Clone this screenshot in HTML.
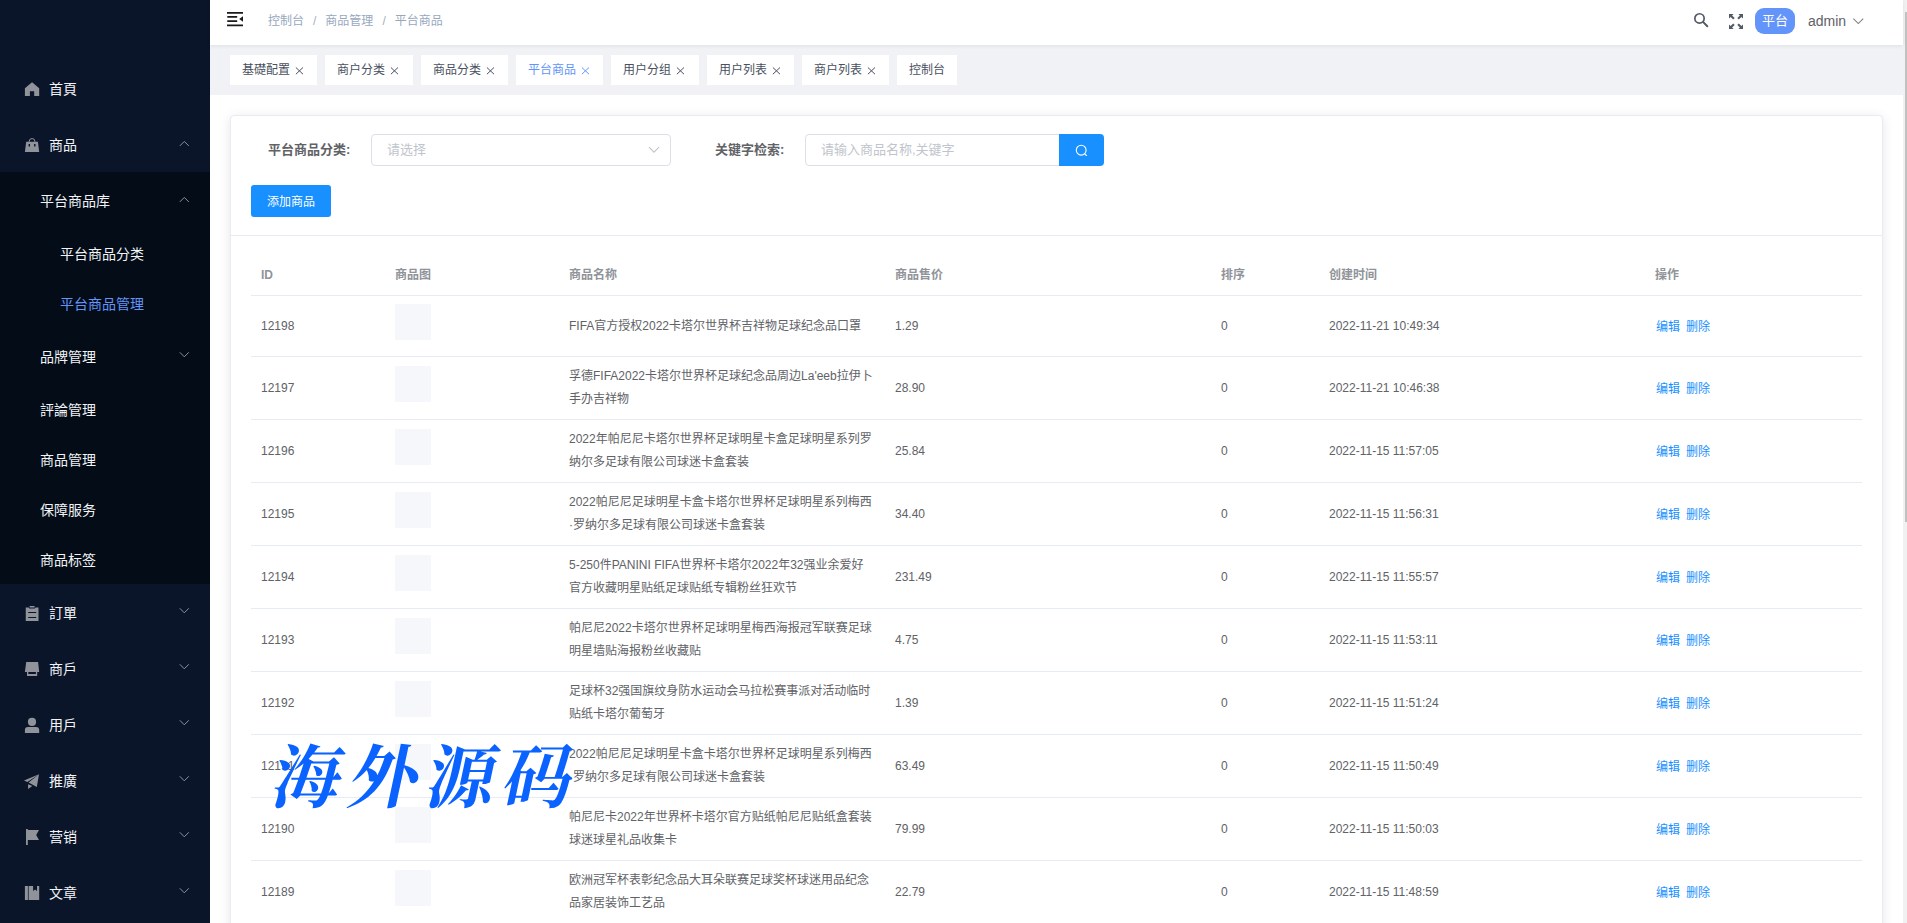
<!DOCTYPE html>
<html lang="zh-CN">
<head>
<meta charset="utf-8">
<title>平台商品</title>
<style>
*{box-sizing:border-box;margin:0;padding:0}
html,body{width:1907px;height:923px;overflow:hidden;background:#fff}
body{font-family:"Liberation Sans","Noto Sans CJK SC",sans-serif;font-size:14px;color:#606266;position:relative}
.abs{position:absolute}
/* sidebar */
#side{position:absolute;left:0;top:0;width:210px;height:923px;background:#0b1529;overflow:hidden}
#sub{position:absolute;left:0;top:172px;width:210px;height:412px;background:#030c17}
.mi{position:absolute;left:0;width:210px;height:56px;line-height:56px;color:#f1f3f6;font-size:14px;white-space:nowrap}
.mi .t{position:absolute;left:49px;top:0}
.mi svg.ic{position:absolute;left:24px;top:20px;width:16px;height:16px;fill:#909399}
.mi svg.ar{position:absolute;left:179px;top:23px;width:11px;height:8px;fill:none;stroke:#8a93a6;stroke-width:1;overflow:visible}
.s1 .t{left:40px}
.s2{height:50px;line-height:50px}
.s2 .t{left:60px}
.s2h{height:50px;line-height:50px}
.act{color:#6394f9}
/* navbar */
#nav{position:absolute;left:210px;top:0;width:1693px;height:45px;background:#fff;box-shadow:0 1px 4px rgba(0,21,41,.08);z-index:3}
#crumb{position:absolute;left:58px;top:1px;height:40px;line-height:40px;font-size:12px;color:#97a8be;white-space:nowrap}
#crumb i{font-style:normal;margin:0 9px;color:#a3b1c4}
#tags{position:absolute;left:210px;top:45px;width:1693px;height:50px;background:#f0f2f5}
.tag{position:absolute;top:10px;height:30px;line-height:31px;background:#fff;font-size:12px;color:#495060;padding-left:12px;white-space:nowrap}
.tag svg{position:absolute;top:11px;width:9px;height:9px;stroke:#495060;stroke-width:1;fill:none}
.tag.on{color:#6394f9}
.tag.on svg{stroke:#6394f9}
/* scrollbar */
#sbt{position:absolute;left:1903px;top:0;width:4px;height:923px;background:#f1f1f1}
#sbh{position:absolute;left:1905px;top:12px;width:2px;height:510px;background:#c1c1c1}
/* card */
#card{position:absolute;left:230px;top:115px;width:1653px;height:900px;background:#fff;border:1px solid #e6ebf5;border-radius:4px;box-shadow:0 2px 12px 0 rgba(0,0,0,.1)}
#hline{position:absolute;left:231px;top:235px;width:1651px;height:1px;background:#e6ebf5}
.lab{position:absolute;top:134px;height:32px;line-height:31px;font-size:13px;font-weight:bold;color:#606266;white-space:nowrap}
.inp{position:absolute;top:134px;height:32px;border:1px solid #dcdfe6;border-radius:4px;background:#fff;font-size:13px;color:#c0c4cc;line-height:30px;padding-left:15px;white-space:nowrap}
#sbtn{position:absolute;left:1059px;top:134px;width:45px;height:32px;background:#1890ff;border-radius:0 4px 4px 0}
#add{position:absolute;left:251px;top:185px;width:80px;height:32px;background:#1890ff;border-radius:3px;color:#fff;font-size:12px;line-height:32px;padding-top:1px;text-align:center}
/* table */
.row{position:absolute;left:251px;width:1611px;border-bottom:1px solid #e6ebf5;font-size:12px;color:#606266}
.row div{position:absolute;white-space:nowrap;line-height:23px}
.th{top:256px;height:40px;color:#909399;font-weight:bold}
.th div{top:8px}
.c0{left:10px}.c1{left:144px}.c2{left:318px}.c3{left:644px}.c4{left:970px}.c5{left:1078px}.c6{left:1405px}
.row .img{left:144px;width:36px;height:36px;background:#f5f7fa}
.c6{color:#1890ff}
.c6 span{margin-right:6px;position:relative;top:1px}
#wm{position:absolute;left:264px;top:734px;font-family:"Liberation Serif","Noto Serif CJK SC",serif;font-weight:700;font-size:69px;line-height:90px;color:#0a62ff;white-space:nowrap;letter-spacing:8px;transform:skewX(-12deg);transform-origin:left bottom;z-index:5}
</style>
</head>
<body>
<div id="side">
<div id="sub"></div>
<div class="mi " style="top:61px"><svg class="ic" viewBox="0 0 16 16"><path d="M8.05 1.3 L15.2 7.2 V15 H10.2 V10.2 H5.9 V15 H0.9 V7.2 Z"/></svg><span class="t">首頁</span></div>
<div class="mi " style="top:117px"><svg class="ic" viewBox="0 0 16 16"><path d="M2.2 4.8 H13.9 L15.2 15 H0.9 Z M4.6 7 h1.4 v2.4 h-1.4 z M10.1 7 h1.4 v2.4 h-1.4 z" fill-rule="evenodd"/><path d="M5.2 5 V4.4 a2.85 2.85 0 0 1 5.7 0 V5" fill="none" stroke="#909399" stroke-width="1"/></svg><span class="t">商品</span><svg class="ar" style="top:24px" viewBox="0 0 11 8"><path d="M0.8 4.9 L5.3 0.4 L9.8 4.9"/></svg></div>
<div class="mi s1" style="top:173px"><span class="t">平台商品库</span><svg class="ar" style="top:24px" viewBox="0 0 11 8"><path d="M0.8 4.9 L5.3 0.4 L9.8 4.9"/></svg></div>
<div class="mi s2" style="top:229px"><span class="t">平台商品分类</span></div>
<div class="mi s2 act" style="top:279px"><span class="t">平台商品管理</span></div>
<div class="mi s1" style="top:329px"><span class="t">品牌管理</span><svg class="ar" style="top:23px" viewBox="0 0 11 8"><path d="M0.8 0.3 L5.3 4.8 L9.8 0.3"/></svg></div>
<div class="mi s1 s2h" style="top:385px"><span class="t">評論管理</span></div>
<div class="mi s1 s2h" style="top:435px"><span class="t">商品管理</span></div>
<div class="mi s1 s2h" style="top:485px"><span class="t">保障服务</span></div>
<div class="mi s1 s2h" style="top:535px"><span class="t">商品标签</span></div>
<div class="mi " style="top:585px"><svg class="ic" viewBox="0 0 16 16"><path d="M1.75 2.5 H4.6 L5.4 3.6 H10.8 L11.6 2.5 H14.5 V16 H1.75 Z M5.6 1 H10.6 V2.6 H5.6 Z M4.2 7 v1 h8 v-1 z M4.2 11.9 v1 h8 v-1 z" fill-rule="evenodd"/></svg><span class="t">訂單</span><svg class="ar" style="top:23px" viewBox="0 0 11 8"><path d="M0.8 0.3 L5.3 4.8 L9.8 0.3"/></svg></div>
<div class="mi " style="top:641px"><svg class="ic" viewBox="0 0 16 16"><path d="M2.2 1 H14.1 L15.2 11 H0.9 Z"/><path d="M3 11 H4.3 V13 H11.9 V11 H13.2 V15 H3 Z"/></svg><span class="t">商戶</span><svg class="ar" style="top:23px" viewBox="0 0 11 8"><path d="M0.8 0.3 L5.3 4.8 L9.8 0.3"/></svg></div>
<div class="mi " style="top:697px"><svg class="ic" viewBox="0 0 16 16"><circle cx="8" cy="4.9" r="4.1"/><path d="M0.9 16 V13 Q0.9 10 3.9 10 H12.2 Q15.2 10 15.2 13 V16 Z"/></svg><span class="t">用戶</span><svg class="ar" style="top:23px" viewBox="0 0 11 8"><path d="M0.8 0.3 L5.3 4.8 L9.8 0.3"/></svg></div>
<div class="mi " style="top:753px"><svg class="ic" viewBox="0 0 16 16"><path d="M15 1.2 L0 7.5 L3.4 9.1 Z M15 1.2 L4.6 9.6 L12.8 14 Z M4.1 11.2 L4.1 16 L8.3 12.9 Z"/></svg><span class="t">推廣</span><svg class="ar" style="top:23px" viewBox="0 0 11 8"><path d="M0.8 0.3 L5.3 4.8 L9.8 0.3"/></svg></div>
<div class="mi " style="top:809px"><svg class="ic" viewBox="0 0 16 16"><path d="M2 0 H3.8 V16 H2 Z M3.8 1 H15 L12.2 6 L15 11 H3.8 Z"/></svg><span class="t">营销</span><svg class="ar" style="top:23px" viewBox="0 0 11 8"><path d="M0.8 0.3 L5.3 4.8 L9.8 0.3"/></svg></div>
<div class="mi " style="top:865px"><svg class="ic" viewBox="0 0 16 16"><path d="M0.9 1 H3.9 V15 H0.9 Z M4.6 1 H9.1 V6 L11.05 4.6 L13 6 V1 H15.2 V15 H4.6 Z"/></svg><span class="t">文章</span><svg class="ar" style="top:23px" viewBox="0 0 11 8"><path d="M0.8 0.3 L5.3 4.8 L9.8 0.3"/></svg></div>
</div>
<div id="nav">
<svg class="abs" style="left:17px;top:11px;width:16px;height:16px" viewBox="0 0 16 16"><path d="M0 0.9 H16 V2.7 H0 Z M0.3 5.1 H10.2 V6.8 H0.3 Z M0.3 9.3 H10.2 V11 H0.3 Z M0 13.4 H16 V15.2 H0 Z M16 5.2 V10.8 L12.2 8 Z" fill="#1a1a1a"/></svg>
<div id="crumb">控制台<i>/</i>商品管理<i>/</i>平台商品</div>
<svg class="abs" style="left:1483px;top:12px;width:17px;height:17px" viewBox="0 0 17 17"><circle cx="6.5" cy="6.4" r="4.65" fill="none" stroke="#535a66" stroke-width="1.7"/><path d="M10 9.9 L14.3 14.2" stroke="#535a66" stroke-width="2" stroke-linecap="round"/></svg>
<svg class="abs" style="left:1518px;top:13px;width:16px;height:17px" viewBox="0 0 16 17" fill="#535a66"><path d="M1 1 H5.6 L4.1 2.5 L6.7 5.1 L5.2 6.6 L2.6 4 L1 5.6 Z M15 1 V5.6 L13.4 4 L10.8 6.6 L9.3 5.1 L11.9 2.5 L10.4 1 Z M1 16 V11.4 L2.6 13 L5.2 10.4 L6.7 11.9 L4.1 14.5 L5.6 16 Z M15 16 H10.4 L11.9 14.5 L9.3 11.9 L10.8 10.4 L13.4 13 L15 11.4 Z"/></svg>
<div class="abs" style="left:1545px;top:8px;width:40px;height:26px;border-radius:9px;background:#6394f9;color:#fff;font-size:13px;line-height:25px;text-align:center">平台</div>
<div class="abs" style="left:1598px;top:0;height:42px;line-height:42px;font-size:14px;color:#606266">admin</div>
<svg class="abs" style="left:1643px;top:17px;width:11px;height:9px" viewBox="0 0 11 9"><path d="M0.4 1.6 L5.3 6.5 L10.2 1.6" fill="none" stroke="#7a7e86" stroke-width="1.05"/></svg>
</div>
<div id="tags">
<div class="tag" style="left:20px;width:87px">基礎配置<svg viewBox="0 0 9 9" style="left:65px"><path d="M0.9 1.5 L8 8.2 M8 1.5 L0.9 8.2"/></svg></div>
<div class="tag" style="left:115px;width:88px">商户分类<svg viewBox="0 0 9 9" style="left:65px"><path d="M0.9 1.5 L8 8.2 M8 1.5 L0.9 8.2"/></svg></div>
<div class="tag" style="left:211px;width:87px">商品分类<svg viewBox="0 0 9 9" style="left:65px"><path d="M0.9 1.5 L8 8.2 M8 1.5 L0.9 8.2"/></svg></div>
<div class="tag on" style="left:306px;width:87px">平台商品<svg viewBox="0 0 9 9" style="left:65px"><path d="M0.9 1.5 L8 8.2 M8 1.5 L0.9 8.2"/></svg></div>
<div class="tag" style="left:401px;width:88px">用户分组<svg viewBox="0 0 9 9" style="left:65px"><path d="M0.9 1.5 L8 8.2 M8 1.5 L0.9 8.2"/></svg></div>
<div class="tag" style="left:497px;width:87px">用户列表<svg viewBox="0 0 9 9" style="left:65px"><path d="M0.9 1.5 L8 8.2 M8 1.5 L0.9 8.2"/></svg></div>
<div class="tag" style="left:592px;width:87px">商户列表<svg viewBox="0 0 9 9" style="left:65px"><path d="M0.9 1.5 L8 8.2 M8 1.5 L0.9 8.2"/></svg></div>
<div class="tag" style="left:687px;width:60px">控制台</div>
</div>
<div id="card"></div>
<div id="hline"></div>
<div class="lab" style="left:268px">平台商品分类:</div>
<div class="inp" style="left:371px;width:300px">请选择<svg class="abs" style="left:276px;top:11px;width:12px;height:8px" viewBox="0 0 12 8"><path d="M1 1.2 L6 6.2 L11 1.2" fill="none" stroke="#c0c4cc" stroke-width="1.1"/></svg></div>
<div class="lab" style="left:715px">关键字检索:</div>
<div class="inp" style="left:805px;width:255px;border-radius:4px 0 0 4px">请输入商品名称,关键字</div>
<div id="sbtn"><svg class="abs" style="left:15px;top:9px;width:15px;height:15px" viewBox="0 0 15 15"><circle cx="7.2" cy="7.2" r="4.9" fill="none" stroke="#fff" stroke-width="1.1"/><path d="M10.8 10.9 L12.4 12.5" stroke="#fff" stroke-width="1.1" stroke-linecap="round"/></svg></div>
<div id="add">添加商品</div>
<div class="row th"><div class="c0">ID</div><div class="c1">商品图</div><div class="c2">商品名称</div><div class="c3">商品售价</div><div class="c4">排序</div><div class="c5">创建时间</div><div class="c6x" style="left:1404px">操作</div></div>
<div class="row" style="top:296px;height:61px"><div class="c0" style="top:18.5px">12198</div><div class="img" style="top:8px"></div><div class="c2" style="top:18.5px">FIFA官方授权2022卡塔尔世界杯吉祥物足球纪念品口罩</div><div class="c3" style="top:18.5px">1.29</div><div class="c4" style="top:18.5px">0</div><div class="c5" style="top:18.5px">2022-11-21 10:49:34</div><div class="c6" style="top:18.5px"><span>编辑</span><span>删除</span></div></div>
<div class="row" style="top:357px;height:63px"><div class="c0" style="top:19.5px">12197</div><div class="img" style="top:9px"></div><div class="c2" style="top:8.0px">孚德FIFA2022卡塔尔世界杯足球纪念品周边La'eeb拉伊卜<br>手办吉祥物</div><div class="c3" style="top:19.5px">28.90</div><div class="c4" style="top:19.5px">0</div><div class="c5" style="top:19.5px">2022-11-21 10:46:38</div><div class="c6" style="top:19.5px"><span>编辑</span><span>删除</span></div></div>
<div class="row" style="top:420px;height:63px"><div class="c0" style="top:19.5px">12196</div><div class="img" style="top:9px"></div><div class="c2" style="top:8.0px">2022年帕尼尼卡塔尔世界杯足球明星卡盒足球明星系列罗<br>纳尔多足球有限公司球迷卡盒套装</div><div class="c3" style="top:19.5px">25.84</div><div class="c4" style="top:19.5px">0</div><div class="c5" style="top:19.5px">2022-11-15 11:57:05</div><div class="c6" style="top:19.5px"><span>编辑</span><span>删除</span></div></div>
<div class="row" style="top:483px;height:63px"><div class="c0" style="top:19.5px">12195</div><div class="img" style="top:9px"></div><div class="c2" style="top:8.0px">2022帕尼尼足球明星卡盒卡塔尔世界杯足球明星系列梅西<br>·罗纳尔多足球有限公司球迷卡盒套装</div><div class="c3" style="top:19.5px">34.40</div><div class="c4" style="top:19.5px">0</div><div class="c5" style="top:19.5px">2022-11-15 11:56:31</div><div class="c6" style="top:19.5px"><span>编辑</span><span>删除</span></div></div>
<div class="row" style="top:546px;height:63px"><div class="c0" style="top:19.5px">12194</div><div class="img" style="top:9px"></div><div class="c2" style="top:8.0px">5-250件PANINI FIFA世界杯卡塔尔2022年32强业余爱好<br>官方收藏明星贴纸足球贴纸专辑粉丝狂欢节</div><div class="c3" style="top:19.5px">231.49</div><div class="c4" style="top:19.5px">0</div><div class="c5" style="top:19.5px">2022-11-15 11:55:57</div><div class="c6" style="top:19.5px"><span>编辑</span><span>删除</span></div></div>
<div class="row" style="top:609px;height:63px"><div class="c0" style="top:19.5px">12193</div><div class="img" style="top:9px"></div><div class="c2" style="top:8.0px">帕尼尼2022卡塔尔世界杯足球明星梅西海报冠军联赛足球<br>明星墙贴海报粉丝收藏贴</div><div class="c3" style="top:19.5px">4.75</div><div class="c4" style="top:19.5px">0</div><div class="c5" style="top:19.5px">2022-11-15 11:53:11</div><div class="c6" style="top:19.5px"><span>编辑</span><span>删除</span></div></div>
<div class="row" style="top:672px;height:63px"><div class="c0" style="top:19.5px">12192</div><div class="img" style="top:9px"></div><div class="c2" style="top:8.0px">足球杯32强国旗纹身防水运动会马拉松赛事派对活动临时<br>贴纸卡塔尔葡萄牙</div><div class="c3" style="top:19.5px">1.39</div><div class="c4" style="top:19.5px">0</div><div class="c5" style="top:19.5px">2022-11-15 11:51:24</div><div class="c6" style="top:19.5px"><span>编辑</span><span>删除</span></div></div>
<div class="row" style="top:735px;height:63px"><div class="c0" style="top:19.5px">12191</div><div class="img" style="top:9px"></div><div class="c2" style="top:8.0px">2022帕尼尼足球明星卡盒卡塔尔世界杯足球明星系列梅西<br>·罗纳尔多足球有限公司球迷卡盒套装</div><div class="c3" style="top:19.5px">63.49</div><div class="c4" style="top:19.5px">0</div><div class="c5" style="top:19.5px">2022-11-15 11:50:49</div><div class="c6" style="top:19.5px"><span>编辑</span><span>删除</span></div></div>
<div class="row" style="top:798px;height:63px"><div class="c0" style="top:19.5px">12190</div><div class="img" style="top:9px"></div><div class="c2" style="top:8.0px">帕尼尼卡2022年世界杯卡塔尔官方贴纸帕尼尼贴纸盒套装<br>球迷球星礼品收集卡</div><div class="c3" style="top:19.5px">79.99</div><div class="c4" style="top:19.5px">0</div><div class="c5" style="top:19.5px">2022-11-15 11:50:03</div><div class="c6" style="top:19.5px"><span>编辑</span><span>删除</span></div></div>
<div class="row" style="top:861px;height:63px"><div class="c0" style="top:19.5px">12189</div><div class="img" style="top:9px"></div><div class="c2" style="top:8.0px">欧洲冠军杯表彰纪念品大耳朵联赛足球奖杯球迷用品纪念<br>品家居装饰工艺品</div><div class="c3" style="top:19.5px">22.79</div><div class="c4" style="top:19.5px">0</div><div class="c5" style="top:19.5px">2022-11-15 11:48:59</div><div class="c6" style="top:19.5px"><span>编辑</span><span>删除</span></div></div>
<div id="wm">海外源码</div>
<div id="sbt"></div><div id="sbh"></div>
</body>
</html>
